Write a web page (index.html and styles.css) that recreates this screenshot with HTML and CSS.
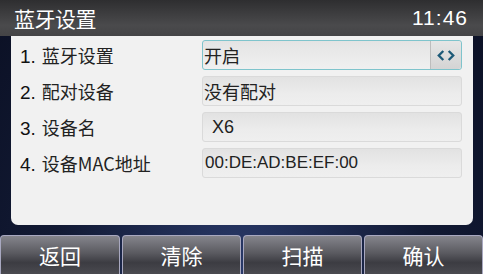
FILE: index.html
```html
<!DOCTYPE html>
<html>
<head>
  <meta charset="UTF-8">
  <title>蓝牙设置</title>
  <link rel="stylesheet" href="styles.css">
</head>
<body>
  <div id="titleBar">
    <span id="titleText">蓝牙设置</span>
    <span id="clock">11:46</span>
  </div>

  <div id="panel">
    <div class="row">
      <span class="label"><span class="num">1.</span>蓝牙设置</span>
      <div class="field active">
        <span class="value">开启</span>
        <span class="switch">
          <svg viewBox="0 0 20 12" width="18" height="11">
            <path d="M7 1 L2 6 L7 11" fill="none" stroke="#1d5a78" stroke-width="2.6"/>
            <path d="M13 1 L18 6 L13 11" fill="none" stroke="#1d5a78" stroke-width="2.6"/>
          </svg>
        </span>
      </div>
    </div>
    <div class="row">
      <span class="label"><span class="num">2.</span>配对设备</span>
      <div class="field"><span class="value">没有配对</span></div>
    </div>
    <div class="row">
      <span class="label"><span class="num">3.</span>设备名</span>
      <div class="field"><span class="value padded">X6</span></div>
    </div>
    <div class="row">
      <span class="label"><span class="num">4.</span>设备MAC地址</span>
      <div class="field"><span class="value mac">00:DE:AD:BE:EF:00</span></div>
    </div>
  </div>

  <div id="softKeys">
    <button class="key">返回</button>
    <button class="key">清除</button>
    <button class="key">扫描</button>
    <button class="key">确认</button>
  </div>
</body>
</html>
```

FILE: styles.css
```css
body {
  margin: 0;
  width: 483px;
  height: 274px;
  overflow: hidden;
  font-family: "Liberation Sans", "Noto Sans CJK SC", sans-serif;
  background: radial-gradient(ellipse at 50% 100%, #2a3a6a 0%, #121a34 55%, #0b1024 100%);
}

#titleBar {
  height: 36px;
  display: flex;
  align-items: center;
  justify-content: space-between;
  padding: 0 15px 0 14px;
  background: linear-gradient(#2e2e30, #4a4a4c 70%, #444446);
  color: #ffffff;
  box-sizing: border-box;
}

#titleText {
  font-size: 21px;
  font-family: "Noto Sans CJK SC", sans-serif;
  letter-spacing: -0.5px;
}

#clock {
  font-size: 21px;
  letter-spacing: 1px;
}

#panel {
  margin: 0 10px 0 11px;
  height: 189px;
  box-sizing: border-box;
  padding: 4px 11px 0 9px;
  background: #f1f1f1;
  border-radius: 0 0 7px 7px;
  display: flex;
  flex-direction: column;
  gap: 6px;
}

.row {
  height: 30px;
  display: flex;
  align-items: center;
  justify-content: space-between;
}

.label {
  font-size: 18px;
  color: #222;
  font-family: "Noto Sans CJK SC", sans-serif;
}

.num {
  font-family: "Liberation Sans", sans-serif;
  font-size: 19px;
  color: #111;
  margin-right: 6px;
}

.field {
  width: 260px;
  height: 30px;
  box-sizing: border-box;
  display: flex;
  align-items: center;
  justify-content: space-between;
  background: linear-gradient(#e2e2e2, #ececec 60%, #efefef);
  border: 1px solid #dadada;
  border-radius: 3px;
}

.field.active {
  border: 1px solid #7fc4cc;
  background: linear-gradient(#e4e4e4, #f0f0f0);
}

.value {
  font-size: 18px;
  color: #222;
  font-family: "Noto Sans CJK SC", sans-serif;
  padding-left: 1px;
}

.value.padded {
  font-family: "Liberation Sans", sans-serif;
  padding-left: 9px;
}

.value.mac {
  font-family: "Liberation Sans", sans-serif;
  font-size: 17px;
  padding-left: 2px;
}

.switch {
  width: 31px;
  height: 28px;
  box-sizing: border-box;
  display: flex;
  align-items: center;
  justify-content: center;
  background: linear-gradient(#e6e6e6, #d4d4d4);
  border-left: 1px solid #bdbdbd;
  border-radius: 0 3px 3px 0;
}

#softKeys {
  margin-top: 10px;
  display: grid;
  grid-template-columns: 120px 119px 119px 119px;
  gap: 2px;
}

.key {
  height: 39px;
  border: 1px solid #a8a8c0;
  border-bottom: none;
  border-radius: 4px 4px 0 0;
  background: linear-gradient(#85858c, #5a5a60 45%, #3c3c42 70%, #4a4a50);
  color: #ffffff;
  font-size: 21px;
  font-family: "Noto Sans CJK SC", sans-serif;
  padding: 0;
}
```
